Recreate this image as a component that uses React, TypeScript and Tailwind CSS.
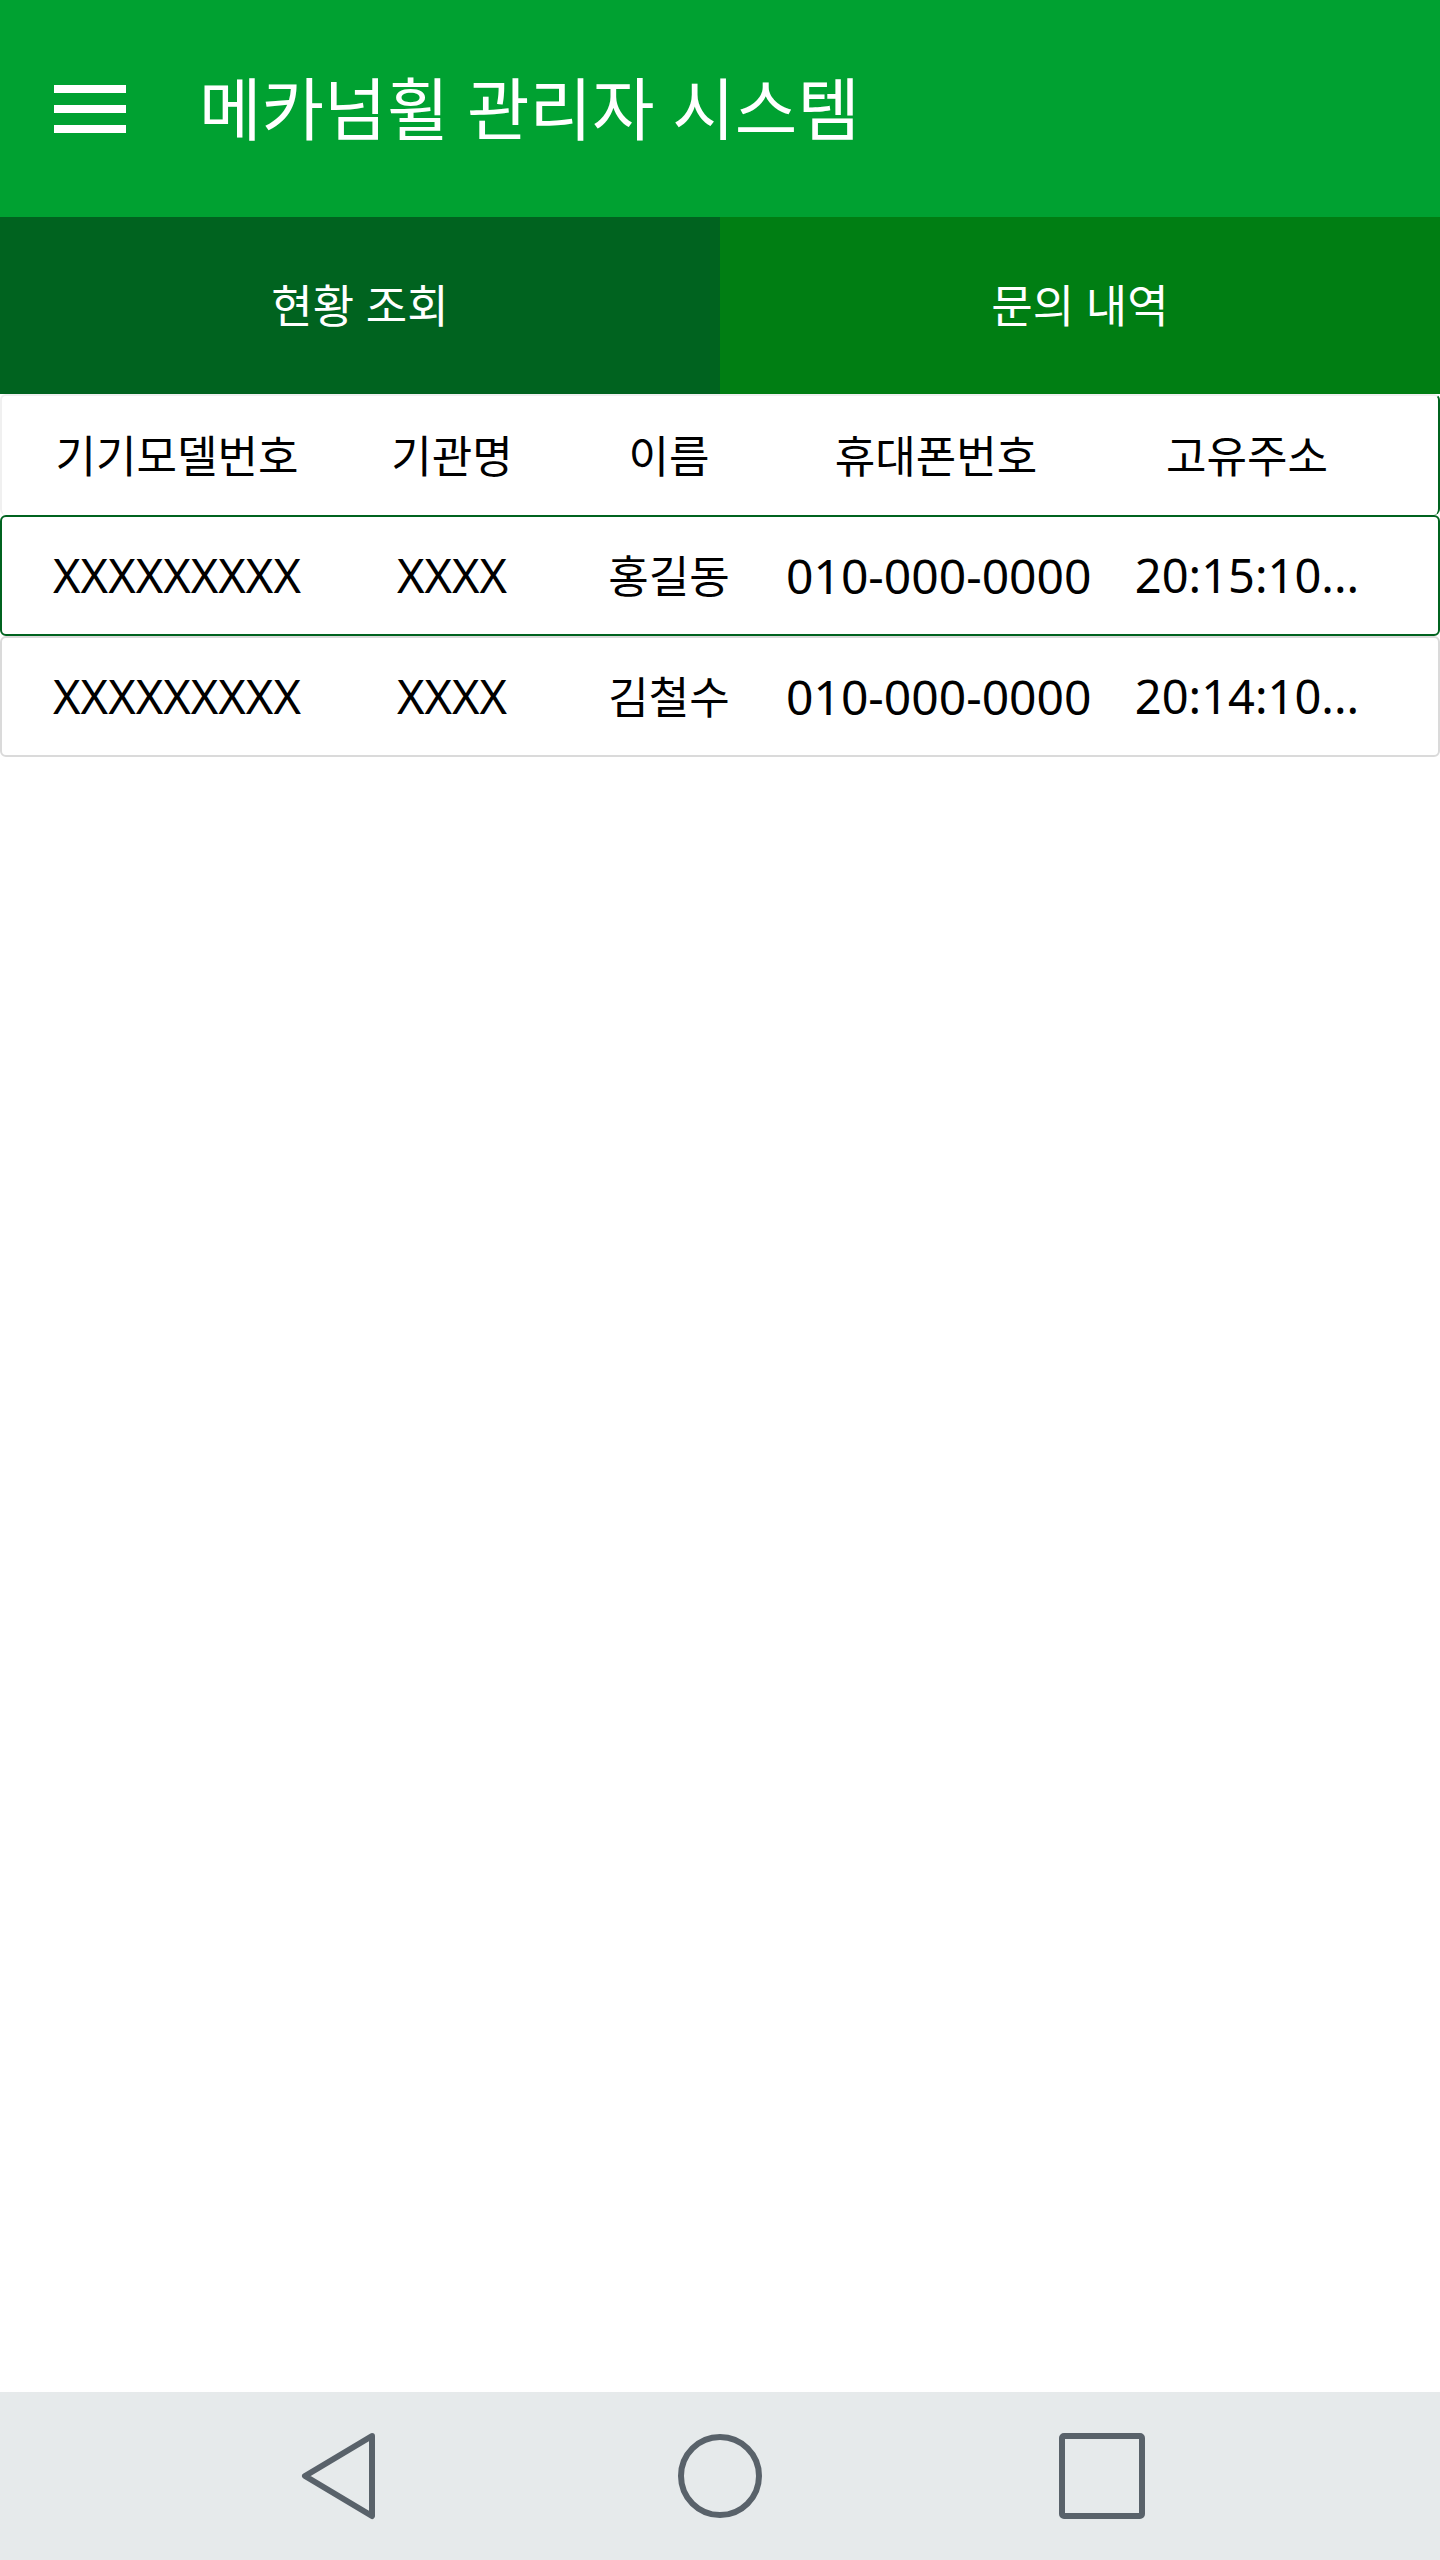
const rows = [
  { model: "XXXXXXXXX", org: "XXXX", name: "홍길동", phone: "010-000-0000", addr: "20:15:10...", selected: true },
  { model: "XXXXXXXXX", org: "XXXX", name: "김철수", phone: "010-000-0000", addr: "20:14:10...", selected: false },
];

const font = { fontFamily: '"Noto Sans", "Noto Sans CJK KR", sans-serif' };

const App = () => {
  return (
    <div className="flex min-h-[2560px] flex-col bg-white" style={font}>
      {/* app bar */}
      <div className="flex h-[217px] items-center bg-[#00a131] pl-[54px]">
        <div className="flex w-[72px] flex-col gap-[12px]">
          <div className="h-[8px] bg-white" />
          <div className="h-[8px] bg-white" />
          <div className="h-[8px] bg-white" />
        </div>
        <div className="ml-[73px] text-[68px] leading-none text-white">메카넘휠 관리자 시스템</div>
      </div>

      {/* tabs */}
      <div className="flex h-[177px]">
        <div className="flex flex-1 items-center justify-center bg-[#00631f] text-[45px] text-white">현황 조회</div>
        <div className="flex flex-1 items-center justify-center bg-[#007e13] text-[45px] text-white">문의 내역</div>
      </div>

      {/* table */}
      <div className="flex h-[121px] items-center rounded-[6px] border-2 border-b-0 border-l-[#f0f0f0] border-t-[#f0f0f0] border-r-[#00631f] text-[44px] text-black">
        <div className="w-[350px] text-center">기기모델번호</div>
        <div className="w-[200px] text-center">기관명</div>
        <div className="w-[234px] text-center">이름</div>
        <div className="w-[300px] text-center">휴대폰번호</div>
        <div className="w-[322px] text-center">고유주소</div>
      </div>
      {rows.map((row, index) => (
        <div
          key={index}
          className={
            row.selected
              ? "flex h-[121px] items-center rounded-[6px] border-2 border-[#00631f] text-black"
              : "flex h-[121px] items-center rounded-[6px] border-2 border-[#dadada] text-black"
          }
        >
          <div className="w-[350px] text-center text-[47px]">{row.model}</div>
          <div className="w-[200px] text-center text-[47px]">{row.org}</div>
          <div className="w-[234px] text-center text-[44px]">{row.name}</div>
          <div className="w-[300px] text-center text-[48px] whitespace-nowrap">{row.phone}</div>
          <div className="w-[322px] text-center text-[47px] whitespace-nowrap">{row.addr}</div>
        </div>
      ))}

      <div className="flex-1" />

      {/* system nav bar */}
      <div className="flex h-[168px] items-center justify-center gap-[292px] bg-[#e6eaeb]">
        <svg width="90" height="90" viewBox="0 0 90 90">
          <polygon points="79,5 12,45 79,85" fill="none" stroke="#59626a" strokeWidth="6" strokeLinejoin="round" />
        </svg>
        <svg width="90" height="90" viewBox="0 0 90 90">
          <circle cx="45" cy="45" r="39" fill="none" stroke="#59626a" strokeWidth="6" />
        </svg>
        <svg width="90" height="90" viewBox="0 0 90 90">
          <rect x="5" y="5" width="80" height="80" rx="2" fill="none" stroke="#59626a" strokeWidth="6" />
        </svg>
      </div>
    </div>
  );
};

export default App;
